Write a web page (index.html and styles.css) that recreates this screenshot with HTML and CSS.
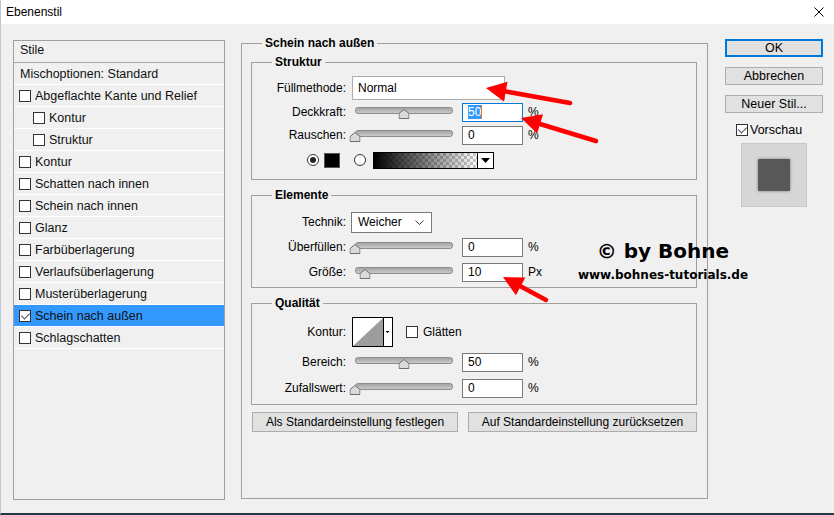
FILE: index.html
```html
<!DOCTYPE html>
<html lang="de">
<head>
    <meta charset="UTF-8">
    <title>Ebenenstil</title>
    <link rel="stylesheet" href="styles.css">
</head>
<body>
    <div class="titlebar">
        <span>Ebenenstil</span>
        <svg class="close" width="10" height="10" viewBox="0 0 10 10"><path d="M0.5 0.5L9.5 9.5M9.5 0.5L0.5 9.5" stroke="#000" stroke-width="1"/></svg>
    </div>

    <div class="dialog">
        <!-- Styles list -->
        <ul class="styles-panel">
            <li class="head first">Stile</li>
            <li class="head">Mischoptionen: Standard</li>
            <li><span class="cb"></span>Abgeflachte Kante und Relief</li>
            <li class="sub"><span class="cb"></span>Kontur</li>
            <li class="sub"><span class="cb"></span>Struktur</li>
            <li><span class="cb"></span>Kontur</li>
            <li><span class="cb"></span>Schatten nach innen</li>
            <li><span class="cb"></span>Schein nach innen</li>
            <li><span class="cb"></span>Glanz</li>
            <li><span class="cb"></span>Farbüberlagerung</li>
            <li><span class="cb"></span>Verlaufsüberlagerung</li>
            <li><span class="cb"></span>Musterüberlagerung</li>
            <li class="active"><span class="cb on"></span>Schein nach außen</li>
            <li><span class="cb"></span>Schlagschatten</li>
        </ul>

        <!-- Settings -->
        <fieldset class="group main">
            <legend>Schein nach außen</legend>

            <fieldset class="group struktur">
                <legend>Struktur</legend>
                <div class="rows">
                    <div class="row tall">
                        <label>Füllmethode:</label>
                        <div class="select">Normal</div>
                    </div>
                    <div class="row">
                        <label>Deckkraft:</label>
                        <div class="slider"><svg class="thumb" style="left: 50%" width="11" height="10" viewBox="0 0 11 10"><path d="M0.5 9.5V4.5L5.5 0.5L10.5 4.5V9.5Z" fill="#dadada" stroke="#6f6f6f"/></svg></div>
                        <div class="field focus"><span class="sel">50</span></div>
                        <span class="unit">%</span>
                    </div>
                    <div class="row">
                        <label>Rauschen:</label>
                        <div class="slider"><svg class="thumb" style="left: 0%" width="11" height="10" viewBox="0 0 11 10"><path d="M0.5 9.5V4.5L5.5 0.5L10.5 4.5V9.5Z" fill="#dadada" stroke="#6f6f6f"/></svg></div>
                        <div class="field">0</div>
                        <span class="unit">%</span>
                    </div>
                    <div class="row color-row">
                        <span class="radio on"></span>
                        <span class="swatch"></span>
                        <span class="radio second"></span>
                        <div class="gradient">
                            <div class="grad-fill"></div>
                            <div class="grad-drop"><svg width="9" height="5" viewBox="0 0 9 5"><path d="M0 0H9L4.5 5Z" fill="#000"/></svg></div>
                        </div>
                    </div>
                </div>
            </fieldset>

            <fieldset class="group elemente">
                <legend>Elemente</legend>
                <div class="rows">
                    <div class="row">
                        <label>Technik:</label>
                        <div class="select technik">Weicher<svg width="9" height="5" viewBox="0 0 9 5"><path d="M0.5 0.5L4.5 4.5L8.5 0.5" fill="none" stroke="#333"/></svg></div>
                    </div>
                    <div class="row">
                        <label>Überfüllen:</label>
                        <div class="slider"><svg class="thumb" style="left: 0%" width="11" height="10" viewBox="0 0 11 10"><path d="M0.5 9.5V4.5L5.5 0.5L10.5 4.5V9.5Z" fill="#dadada" stroke="#6f6f6f"/></svg></div>
                        <div class="field">0</div>
                        <span class="unit">%</span>
                    </div>
                    <div class="row">
                        <label>Größe:</label>
                        <div class="slider"><svg class="thumb" style="left: 10%" width="11" height="10" viewBox="0 0 11 10"><path d="M0.5 9.5V4.5L5.5 0.5L10.5 4.5V9.5Z" fill="#dadada" stroke="#6f6f6f"/></svg></div>
                        <div class="field">10</div>
                        <span class="unit">Px</span>
                    </div>
                </div>
            </fieldset>

            <fieldset class="group qualitaet">
                <legend>Qualität</legend>
                <div class="rows">
                    <div class="row contour-row">
                        <label>Kontur:</label>
                        <div class="contour">
                            <svg width="39" height="28" viewBox="0 0 39 28">
                                <rect width="39" height="28" fill="#fff"/>
                                <path d="M0 28L30 0V28Z" fill="#9d9d9d"/>
                                <path d="M30.5 0V28" stroke="#000"/>
                                <path d="M32.5 13H36.5L34.5 15Z" fill="#000"/>
                            </svg>
                        </div>
                        <span class="cb glaetten"></span>
                        <span class="cb-label">Glätten</span>
                    </div>
                    <div class="row">
                        <label>Bereich:</label>
                        <div class="slider"><svg class="thumb" style="left: 50%" width="11" height="10" viewBox="0 0 11 10"><path d="M0.5 9.5V4.5L5.5 0.5L10.5 4.5V9.5Z" fill="#dadada" stroke="#6f6f6f"/></svg></div>
                        <div class="field">50</div>
                        <span class="unit">%</span>
                    </div>
                    <div class="row">
                        <label>Zufallswert:</label>
                        <div class="slider"><svg class="thumb" style="left: 0%" width="11" height="10" viewBox="0 0 11 10"><path d="M0.5 9.5V4.5L5.5 0.5L10.5 4.5V9.5Z" fill="#dadada" stroke="#6f6f6f"/></svg></div>
                        <div class="field">0</div>
                        <span class="unit">%</span>
                    </div>
                </div>
            </fieldset>

            <div class="default-buttons">
                <button class="btn set-default">Als Standardeinstellung festlegen</button>
                <button class="btn reset-default">Auf Standardeinstellung zurücksetzen</button>
            </div>
        </fieldset>

        <!-- Dialog buttons -->
        <div class="actions">
            <button class="btn default">OK</button>
            <button class="btn">Abbrechen</button>
            <button class="btn">Neuer Stil...</button>
            <div class="preview-toggle"><span class="cb on"></span>Vorschau</div>
            <div class="preview"><div class="preview-square"></div></div>
        </div>
    </div>

    <div class="watermark">
        <div class="wm-title">© by Bohne</div>
        <div class="wm-url">www.bohnes-tutorials.de</div>
    </div>

    <svg class="arrows" width="834" height="515" viewBox="0 0 834 515">
        <g stroke="#f00" stroke-width="4.5" stroke-linecap="round">
            <path d="M569 103L505 91.5"/>
            <path d="M595 141L539 124"/>
            <path d="M545 300L519 286"/>
        </g>
        <g fill="#f00">
            <path d="M485 88L506.5 81.7L502.9 101.4Z"/>
            <path d="M520 118L542 114.3L536.2 133.5Z"/>
            <path d="M502 277L524.3 277.6L514.9 295.2Z"/>
        </g>
    </svg>
</body>
</html>
```

FILE: styles.css
```css
* {
    box-sizing: border-box;
}

body {
    margin: 0;
    width: 834px;
    height: 515px;
    overflow: hidden;
    position: relative;
    background: #f0f0f0;
    border-left: 1px solid #b9c6d6;
    border-bottom: 2px solid #27384a;
    font-family: 'Liberation Sans', Arial, sans-serif;
    font-size: 12px;
    color: #000;
}

.titlebar {
    height: 24px;
    background: #fff;
    display: flex;
    align-items: center;
    justify-content: space-between;
    padding: 0 10px 0 5px;
}

.dialog {
    display: flex;
    align-items: flex-start;
    padding: 12px 0 0 12px;
}

/* Styles list */
.styles-panel {
    list-style: none;
    margin: 4px 0 0;
    padding: 0;
    width: 212px;
    height: 460px;
    border: 1px solid #a0a0a0;
    background: #f0f0f0;
    font-size: 12.5px;
}

.styles-panel li {
    height: 22px;
    display: flex;
    align-items: center;
    padding-left: 5px;
    border-bottom: 1px solid #fff;
    color: #111;
}

.styles-panel li.head {
    padding-left: 6px;
}

.styles-panel li.first {
    border-bottom-color: #a8a8a8;
    padding-bottom: 3px;
}

.styles-panel li.sub {
    padding-left: 19px;
}

.styles-panel li.active {
    background: #3399ff;
}

.cb {
    position: relative;
    width: 12px;
    height: 12px;
    border: 1px solid #333;
    background: #fff;
    margin-right: 4px;
    flex-shrink: 0;
}

.cb.on::after {
    content: '';
    position: absolute;
    left: 3px;
    top: 0;
    width: 4px;
    height: 7px;
    border: solid #444;
    border-width: 0 1.5px 1.5px 0;
    transform: rotate(45deg);
}

/* Group boxes */
.group {
    margin: 0;
    min-width: 0;
    border: 1px solid #a0a0a0;
    padding: 0;
}

.group legend {
    padding: 0 3px;
    margin-left: 20px;
    line-height: 14px;
    font-weight: bold;
}

.main {
    margin-left: 16px;
    width: 467px;
    height: 463px;
    padding: 5px 10px 0 9px;
}

.main > legend {
    margin-left: 11px;
}

.struktur {
    padding: 7px 0 6px;
}

.elemente {
    margin-top: 8px;
    padding: 9px 0 4px;
}

.qualitaet {
    margin-top: 8px;
    padding: 7px 0 5px;
}

.rows {
    display: flex;
    flex-direction: column;
    gap: 1px;
}

.elemente .rows {
    gap: 3px;
}

.qualitaet .rows {
    gap: 4px;
}

.row {
    display: flex;
    align-items: center;
    height: 22px;
}

.row.tall {
    height: 24px;
}

.row label {
    width: 94px;
    margin-right: 6px;
    text-align: right;
    flex-shrink: 0;
}

.select {
    width: 153px;
    height: 24px;
    border: 1px solid #acacac;
    background: #fff;
    padding-left: 5px;
    display: flex;
    align-items: center;
}

.select.technik {
    width: 81px;
    height: 21px;
    margin-left: -1px;
    border-color: #7a7a7a;
    justify-content: space-between;
    padding: 0 7px 0 6px;
}

.slider {
    position: relative;
    width: 98px;
    height: 14px;
    margin-left: 3px;
}

.slider::before {
    content: '';
    position: absolute;
    left: 0;
    right: 0;
    top: 2px;
    height: 5px;
    border-radius: 3px;
    border: 1px solid #8c8c8c;
    background: linear-gradient(#a3a3a3, #cacaca);
}

.thumb {
    position: absolute;
    top: 4px;
    transform: translateX(-50%);
}

.field {
    width: 61px;
    height: 19px;
    margin-left: 9px;
    border: 1px solid #7a7a7a;
    background: #fff;
    padding-left: 5px;
    display: flex;
    align-items: center;
}

.field.focus {
    border-color: #0078d7;
}

.sel {
    background: #3399ff;
    color: #fff;
    border-right: 1px solid #e07a1f;
}

.unit {
    margin-left: 5px;
}

/* Colour row */
.color-row {
    height: 26px;
    padding-left: 55px;
}

.radio {
    position: relative;
    width: 12px;
    height: 12px;
    border-radius: 50%;
    border: 1px solid #333;
    background: #fff;
}

.radio.on::after {
    content: '';
    position: absolute;
    left: 2px;
    top: 2px;
    width: 6px;
    height: 6px;
    border-radius: 50%;
    background: #222;
}

.swatch {
    width: 16px;
    height: 15px;
    margin-left: 5px;
    background: #000;
    border: 1px solid #555;
}

.radio.second {
    margin-left: 14px;
}

.gradient {
    display: flex;
    width: 121px;
    height: 17px;
    margin-left: 7px;
    border: 1px solid #000;
}

.grad-fill {
    flex: 1;
    background:
        linear-gradient(to right, #000, rgba(0, 0, 0, 0)),
        repeating-conic-gradient(#c8c8c8 0 25%, #fff 0 50%) 0 0 / 6px 6px;
}

.grad-drop {
    width: 16px;
    border-left: 1px solid #000;
    background: #fff;
    display: flex;
    align-items: center;
    justify-content: center;
}

/* Qualität */
.contour-row {
    height: 30px;
}

.contour {
    width: 41px;
    height: 30px;
    border: 1px solid #000;
}

.contour svg {
    display: block;
}

.cb.glaetten {
    margin-left: 13px;
    margin-right: 5px;
}

.default-buttons {
    display: flex;
    gap: 10px;
    margin-top: 7px;
    padding-left: 1px;
}

.btn {
    font-family: inherit;
    font-size: 12px;
    color: #000;
    height: 20px;
    padding: 0;
    border: 1px solid #adadad;
    background: #e1e1e1;
    display: flex;
    align-items: center;
    justify-content: center;
}

.set-default {
    width: 206px;
}

.reset-default {
    width: 229px;
}

/* Right column */
.actions {
    display: flex;
    flex-direction: column;
    width: 98px;
    margin: 3px 0 0 17px;
}

.actions .btn {
    width: 98px;
    height: 18px;
    margin-bottom: 10px;
    font-size: 12.5px;
}

.actions .btn.default {
    border-color: #0078d7;
    box-shadow: inset 0 0 0 1px #0078d7;
}

.preview-toggle {
    display: flex;
    align-items: center;
    height: 14px;
    padding-left: 11px;
    font-size: 12.5px;
}

.preview-toggle .cb {
    margin-right: 2px;
}

.preview {
    width: 66px;
    height: 64px;
    margin: 6px 0 0 16px;
    background: #d6d6d6;
    border: 1px solid #c8c8c8;
    display: flex;
    align-items: center;
    justify-content: center;
}

.preview-square {
    width: 32px;
    height: 32px;
    background: #585858;
    border-radius: 1px;
    box-shadow: 0 0 3px #777;
}

/* Overlays */
.watermark {
    position: absolute;
    left: 562px;
    top: 239px;
    width: 200px;
    text-align: center;
    font-family: 'DejaVu Sans', Verdana, sans-serif;
    font-weight: bold;
}

.wm-title {
    font-size: 20px;
    line-height: 24px;
}

.wm-url {
    margin-top: 5px;
    font-size: 12px;
    line-height: 14px;
}

.arrows {
    position: absolute;
    left: 0;
    top: 0;
    pointer-events: none;
}
```
